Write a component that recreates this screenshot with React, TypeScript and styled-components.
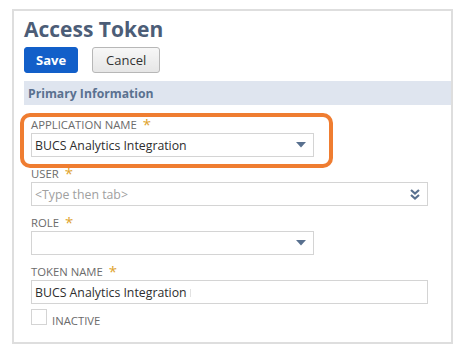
import * as React from "react"
import styled, { createGlobalStyle } from 'styled-components'

const GlobalStyle = createGlobalStyle`
    body {
        margin: 0;
        background: #ffffff;
        font-family: "Open Sans", "Liberation Sans", sans-serif;
    }
`

const Frame = styled.div`
    margin: 9px 0 0 12px;
    width: 427px;
    height: 331px;
    border: 2px solid #dedede;
    padding-left: 10px;
`

const Title = styled.h1`
    margin: 0;
    padding-top: 3px;
    font-size: 21px;
    line-height: 30px;
    font-weight: 700;
    color: #4c5d77;
`

const ButtonRow = styled.div`
    display: flex;
    gap: 14px;
    margin-top: 3px;
`

const Button = styled.button<{ $primary?: boolean }>`
    height: 26px;
    padding: 0 ${p => p.$primary ? 11 : 13}px;
    border-radius: 3px;
    font-family: "Open Sans", sans-serif;
    font-size: 13px;
    font-weight: ${p => p.$primary ? 700 : 400};
    color: ${p => p.$primary ? '#ffffff' : '#333333'};
    background: ${p => p.$primary ? '#125fc9' : 'linear-gradient(#f7f7f7, #e6e6e6)'};
    border: 1px solid ${p => p.$primary ? '#125fc9' : '#b7b7b7'};
`

const SectionBar = styled.div`
    margin-top: 8px;
    height: 24px;
    background: #dfe5ef;
    display: flex;
    align-items: center;
    padding-left: 4px;
    font-size: 12.2px;
    font-weight: 700;
    color: #5a7190;
`

const Fields = styled.div`
    display: flex;
    flex-direction: column;
    padding: 13px 0 0 7px;
`

const Field = styled.div`
    position: relative;

    & + & {
        margin-top: 10px;
    }
`

const Highlight = styled.div`
    position: absolute;
    left: -11px;
    top: -5px;
    width: 313px;
    height: 55px;
    box-sizing: border-box;
    border: 4px solid #ef7d31;
    border-radius: 10px;
    pointer-events: none;
`

const Label = styled.div`
    font-size: 11.3px;
    line-height: 14px;
    color: #6b6b6b;
    text-transform: uppercase;
    margin-bottom: 1px;
    display: flex;
    align-items: center;
`

const Star = styled.span`
    color: #e0a32e;
    font-size: 15px;
    margin-left: 6px;
    line-height: 12px;
    position: relative;
    top: -1px;
`

const Input = styled.div<{ $wide?: boolean }>`
    width: ${p => p.$wide ? '397px' : '283px'};
    height: 24px;
    box-sizing: border-box;
    border: 1px solid #d4d4d4;
    display: flex;
    align-items: center;
    justify-content: space-between;
    padding: 0 7px 0 3px;
    font-size: 12.3px;
    color: #2e2e2e;
`

const Placeholder = styled.span`
    color: #a0a0a0;
`

const Caret = styled.span`
    display: inline-block;
    width: 1px;
    height: 8px;
    background: #e2e2e2;
    margin-left: 3px;
`

const CheckRow = styled.div`
    display: flex;
    align-items: flex-end;
    gap: 5px;
    margin-top: 5px;
`

const Box = styled.div`
    width: 16px;
    height: 16px;
    box-sizing: border-box;
    border: 1px solid #d4d4d4;
`

const CheckLabel = styled.span`
    font-size: 11.3px;
    line-height: 14px;
    color: #6b6b6b;
    text-transform: uppercase;
    margin-bottom: -3px;
`

const TriangleDown = () => (
    <svg width="10" height="6" viewBox="0 0 10 6">
        <path d="M0 0 H10 L5 5.5 Z" fill="#58708f" />
    </svg>
)

const DoubleChevron = () => (
    <svg width="10" height="11" viewBox="0 0 10 11">
        <path d="M1 1 L5 4.5 L9 1" stroke="#58708f" strokeWidth="2.2" fill="none" />
        <path d="M1 6 L5 9.5 L9 6" stroke="#58708f" strokeWidth="2.2" fill="none" />
    </svg>
)

const App = () => {
    return (
        <>
            <GlobalStyle />
            <Frame>
                <Title>Access Token</Title>
                <ButtonRow>
                    <Button $primary>Save</Button>
                    <Button>Cancel</Button>
                </ButtonRow>
                <SectionBar>Primary Information</SectionBar>
                <Fields>
                    <Field>
                        <Highlight />
                        <Label>Application Name<Star>*</Star></Label>
                        <Input>BUCS Analytics Integration<TriangleDown /></Input>
                    </Field>
                    <Field>
                        <Label>User<Star>*</Star></Label>
                        <Input $wide><Placeholder>&lt;Type then tab&gt;</Placeholder><DoubleChevron /></Input>
                    </Field>
                    <Field>
                        <Label>Role<Star>*</Star></Label>
                        <Input><span /><TriangleDown /></Input>
                    </Field>
                    <Field>
                        <Label>Token Name<Star>*</Star></Label>
                        <Input $wide><span>BUCS Analytics Integration<Caret /></span></Input>
                    </Field>
                    <CheckRow>
                        <Box />
                        <CheckLabel>Inactive</CheckLabel>
                    </CheckRow>
                </Fields>
            </Frame>
        </>
    )
}

export default App
